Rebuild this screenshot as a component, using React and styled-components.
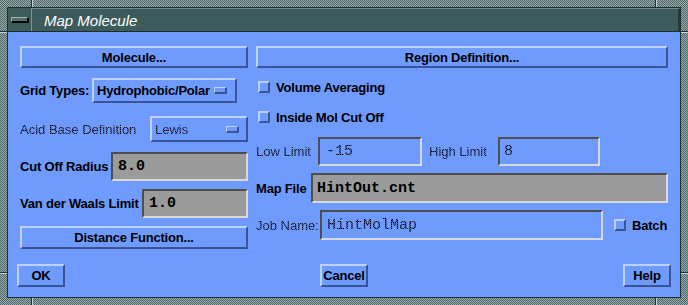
import styled, { createGlobalStyle, css } from 'styled-components';

const BLUE = '#6f9bff';
const LIGHT = '#bdd2ff';
const DARK = '#3a5597';

const GlobalStyle = createGlobalStyle`
  html, body {
    margin: 0;
    padding: 0;
    background: #566b6b;
  }
  * {
    box-sizing: border-box;
  }
`;

// motif "insensitive" text: a 50% dot pattern cut out by the glyphs
const stipple = css`
  background: repeating-conic-gradient(#000 0 25%, #34497f 0 50%) 0 0 / 2px 2px;
  -webkit-background-clip: text;
  background-clip: text;
  color: transparent;
`;

const raised = css`
  border: 2px solid;
  border-color: ${LIGHT} ${DARK} ${DARK} ${LIGHT};
`;

const Window = styled.div`
  position: relative;
  width: 688px;
  height: 305px;
  padding: 7px;
  display: flex;
  background: repeating-conic-gradient(#97abab 0 25%, #52676a 0 50%) 0 0 / 2px 2px;
`;

const Notch = styled.span`
  position: absolute;
  left: ${(p) => p.$x}px;
  top: ${(p) => p.$y}px;
  width: ${(p) => (p.$across ? 7 : 2)}px;
  height: ${(p) => (p.$across ? 2 : 7)}px;
  background: #1f3232;
  border-${(p) => (p.$across ? 'bottom' : 'right')}: 1px solid #c4d4d4;
`;

const Inner = styled.div`
  flex: 1;
  display: flex;
  flex-direction: column;
  border: 1px solid #1f3030;
`;

const TitleBar = styled.div`
  display: flex;
  height: 24px;
  background: #3d5b5b;
  border-bottom: 1px solid #1c2c2c;
`;

const MenuButton = styled.div`
  width: 24px;
  display: flex;
  align-items: center;
  justify-content: center;
  border-right: 1px solid #7f9595;
`;

const MenuGlyph = styled.span`
  width: 17px;
  height: 5px;
  background: #4f6e6e;
  border: 1px solid #000;
  border-top-color: #9fb5b5;
  border-left-color: #9fb5b5;
  box-shadow: 1px 1px 0 #000;
`;

const Title = styled.div`
  flex: 1;
  display: flex;
  align-items: center;
  padding-left: 12px;
  border-top: 1px solid #6f8c8c;
  border-right: 2px solid #263a3a;
  color: #fff;
  font: italic 15px 'Liberation Sans', Arial, sans-serif;
`;

const Content = styled.div`
  flex: 1;
  display: flex;
  flex-direction: column;
  padding-top: 14px;
  background: ${BLUE};
  font: bold 13px 'Liberation Sans', Arial, sans-serif;
  letter-spacing: -0.2px;
  color: #000;
`;

const Main = styled.div`
  display: grid;
  grid-template-columns: 228px 412px;
  column-gap: 8px;
  align-items: start;
  padding: 0 12px;
`;

const Column = styled.div`
  display: flex;
  flex-direction: column;
`;

const PushButton = styled.button`
  ${raised};
  width: ${(p) => (p.$w ? `${p.$w}px` : '100%')};
  height: ${(p) => p.$h || 22}px;
  margin: ${(p) => p.$mt || 0}px 0 0;
  padding: 0;
  background: ${BLUE};
  font: inherit;
  letter-spacing: inherit;
  color: #000;
`;

const Row = styled.div`
  display: flex;
  align-items: center;
  height: ${(p) => p.$h}px;
  margin-top: ${(p) => p.$mt || 0}px;
  justify-content: ${(p) => (p.$spread ? 'space-between' : 'flex-start')};
`;

const insensitive = css`
  font-weight: normal;
  font-size: 13px;
  letter-spacing: 0;
  ${stipple};
`;

const Label = styled.span`
  flex: none;
  width: ${(p) => (p.$w ? `${p.$w}px` : 'auto')};
  margin-left: ${(p) => p.$ml || 0}px;
  white-space: nowrap;
  ${(p) => p.$off && insensitive}
`;

const OptionButton = styled.div`
  ${raised};
  flex: none;
  width: ${(p) => p.$w}px;
  height: 100%;
  display: flex;
  align-items: center;
  justify-content: space-between;
  padding: 0 ${(p) => p.$pr}px 0 3px;
`;

const OptionText = styled.span`
  ${(p) => p.$off && insensitive}
`;

const Indicator = styled.span`
  width: 13px;
  height: 7px;
  border-style: solid;
  border-width: 1px 2px 2px 1px;
  border-color: ${LIGHT} ${DARK} ${DARK} ${LIGHT};
`;

const Field = styled.div`
  flex: ${(p) => (p.$w ? 'none' : 1)};
  width: ${(p) => (p.$w ? `${p.$w}px` : 'auto')};
  height: 100%;
  display: flex;
  align-items: center;
  padding-left: ${(p) => p.$pl || 5}px;
  border: 2px solid;
  border-color: #4e4e4e #d8d8d8 #d8d8d8 #4e4e4e;
  background: ${(p) => (p.$off ? BLUE : '#9b9b9b')};
  font: bold 15px 'Liberation Mono', 'Courier New', monospace;
  letter-spacing: 0;
`;

const FieldText = styled.span`
  white-space: pre;
  ${(p) =>
    p.$off &&
    css`
      font-weight: normal;
      ${stipple};
    `}
`;

const CheckBox = styled.span`
  ${raised};
  flex: none;
  width: 12px;
  height: 12px;
  background: ${BLUE};
`;

const Toggle = styled.label`
  display: flex;
  align-items: center;
  gap: 6px;
  padding-left: ${(p) => p.$pl || 0}px;
  height: ${(p) => p.$h || 20}px;
  margin-top: ${(p) => p.$mt || 0}px;
  white-space: nowrap;
`;

const Footer = styled.div`
  display: flex;
  justify-content: space-between;
  margin-top: 15px;
  padding: 0 9px;
`;

const Option = ({ w, pr, off, children }) => (
  <OptionButton $w={w} $pr={pr}>
    <OptionText $off={off}>{children}</OptionText>
    <Indicator />
  </OptionButton>
);

const notches = [
  { x: 31, y: 0 },
  { x: 655, y: 0 },
  { x: 31, y: 298 },
  { x: 655, y: 298 },
  { x: 0, y: 31, across: true },
  { x: 0, y: 272, across: true },
  { x: 681, y: 31, across: true },
  { x: 681, y: 272, across: true },
];

const App = () => (
  <>
    <GlobalStyle />
    <Window>
      {notches.map((n, i) => (
        <Notch key={i} $x={n.x} $y={n.y} $across={n.across} />
      ))}
      <Inner>
        <TitleBar>
          <MenuButton>
            <MenuGlyph />
          </MenuButton>
          <Title>Map Molecule</Title>
        </TitleBar>
        <Content>
          <Main>
            <Column>
              <PushButton>Molecule...</PushButton>
              <Row $h={25} $mt={10}>
                <Label $w={72}>Grid Types:</Label>
                <Option w={145} pr={8}>
                  Hydrophobic/Polar
                </Option>
              </Row>
              <Row $h={26} $mt={13} $spread>
                <Label $off>Acid Base Definition</Label>
                <Option w={98} pr={7} off>
                  Lewis
                </Option>
              </Row>
              <Row $h={29} $mt={10} $spread>
                <Label>Cut Off Radius</Label>
                <Field $w={137} $pl={5}>
                  <FieldText>8.0</FieldText>
                </Field>
              </Row>
              <Row $h={29} $mt={8} $spread>
                <Label>Van der Waals Limit</Label>
                <Field $w={106} $pl={5}>
                  <FieldText>1.0</FieldText>
                </Field>
              </Row>
              <PushButton $h={23} $mt={8}>
                Distance Function...
              </PushButton>
            </Column>
            <Column>
              <PushButton>Region Definition...</PushButton>
              <Toggle $mt={9} $pl={2}>
                <CheckBox />
                Volume Averaging
              </Toggle>
              <Toggle $mt={10} $pl={2}>
                <CheckBox />
                Inside Mol Cut Off
              </Toggle>
              <Row $h={29} $mt={10}>
                <Label $off $w={62}>
                  Low Limit
                </Label>
                <Field $w={104} $off $pl={6}>
                  <FieldText $off>-15</FieldText>
                </Field>
                <Label $off $w={69} $ml={7}>
                  High Limit
                </Label>
                <Field $w={102} $off $pl={4}>
                  <FieldText $off>8</FieldText>
                </Field>
              </Row>
              <Row $h={30} $mt={7}>
                <Label $w={55}>Map File</Label>
                <Field $pl={4}>
                  <FieldText>HintOut.cnt</FieldText>
                </Field>
              </Row>
              <Row $h={30} $mt={7}>
                <Label $off $w={64}>
                  Job Name:
                </Label>
                <Field $w={283} $off $pl={5}>
                  <FieldText $off>HintMolMap</FieldText>
                </Field>
                <Toggle $pl={11}>
                  <CheckBox />
                  Batch
                </Toggle>
              </Row>
            </Column>
          </Main>
          <Footer>
            <PushButton $w={48} $h={23}>
              OK
            </PushButton>
            <PushButton $w={48} $h={23}>
              Cancel
            </PushButton>
            <PushButton $w={48} $h={23}>
              Help
            </PushButton>
          </Footer>
        </Content>
      </Inner>
    </Window>
  </>
);

export default App;
